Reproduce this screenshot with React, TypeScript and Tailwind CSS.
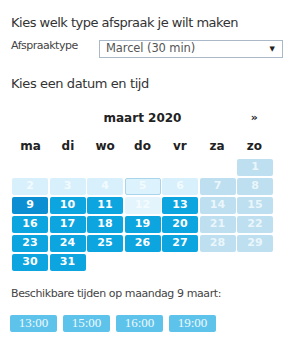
import React from "react";

type Kind = "past" | "today" | "weekend" | "avail" | "sel" | "light" | "empty";

const cells: { d: string; k: Kind }[] = [
  ...Array.from({ length: 6 }, () => ({ d: "", k: "empty" as Kind })),
  { d: "1", k: "weekend" },
  { d: "2", k: "past" },
  { d: "3", k: "past" },
  { d: "4", k: "past" },
  { d: "5", k: "today" },
  { d: "6", k: "past" },
  { d: "7", k: "weekend" },
  { d: "8", k: "weekend" },
  { d: "9", k: "sel" },
  { d: "10", k: "avail" },
  { d: "11", k: "avail" },
  { d: "12", k: "light" },
  { d: "13", k: "avail" },
  { d: "14", k: "weekend" },
  { d: "15", k: "weekend" },
  { d: "16", k: "avail" },
  { d: "17", k: "avail" },
  { d: "18", k: "avail" },
  { d: "19", k: "avail" },
  { d: "20", k: "avail" },
  { d: "21", k: "weekend" },
  { d: "22", k: "weekend" },
  { d: "23", k: "avail" },
  { d: "24", k: "avail" },
  { d: "25", k: "avail" },
  { d: "26", k: "avail" },
  { d: "27", k: "avail" },
  { d: "28", k: "weekend" },
  { d: "29", k: "weekend" },
  { d: "30", k: "avail" },
  { d: "31", k: "avail" },
];

const cls: Record<Kind, string> = {
  empty: "",
  past: "bg-[#d8f0fb] text-[#f2fbff]",
  today: "bg-[#dcf2fc] text-[#f2fbff] border border-[#a9d5ea]",
  weekend: "bg-[#bddff0] text-[#eaf6fb]",
  avail: "bg-[#0ca5e0] text-white",
  sel: "bg-[#0b8ed2] text-white",
  light: "bg-[#e3f4fc] text-[#f4fbff]",
};

export default function App() {
  return (
    <div
      className="w-[300px] h-[364px] bg-white text-[#333] px-[11px] pt-[15px]"
      style={{ fontFamily: "'DejaVu Sans', Verdana, sans-serif" }}
    >
      <div className="text-[13px] leading-[16px] tracking-[-0.5px]">Kies welk type afspraak je wilt maken</div>
      <div className="flex items-center mt-[9px] h-[18px]">
        <div className="text-[11px] text-[#444] w-[88px] -mt-[5px] tracking-[-0.5px]">Afspraaktype</div>
        <div className="w-[184px] h-[18px] border border-[#aab8c8] flex items-center justify-between pl-[6px] pr-[7px] text-[11.5px] text-[#555]">
          <span className="tracking-[-0.1px]">Marcel (30 min)</span>
          <span className="text-[7px] text-[#222]">▼</span>
        </div>
      </div>
      <div className="text-[13px] leading-[16px] mt-[18px] tracking-[-0.4px]">Kies een datum en tijd</div>

      <div className="w-[261px] ml-[1px] mt-[17px]">
        <div className="grid grid-cols-7 h-[16px] items-center">
          <div />
          <div className="col-span-5 text-center font-bold text-[12px] text-[#222]">maart 2020</div>
          <div className="text-center font-bold text-[11px] text-[#222]">»</div>
        </div>
        <div className="grid grid-cols-7 mt-[12px] h-[16px] items-center">
          {["ma", "di", "wo", "do", "vr", "za", "zo"].map((w) => (
            <div key={w} className="text-center font-bold text-[12px] text-[#222]">
              {w}
            </div>
          ))}
        </div>
        <div className="grid grid-cols-7 gap-x-[1.5px] gap-y-[2px] mt-[6px]">
          {cells.map((c, i) => (
            <div
              key={i}
              className={`h-[17px] rounded-[2px] flex items-center justify-center font-bold text-[11px] ${cls[c.k]}`}
            >
              {c.d}
            </div>
          ))}
        </div>
      </div>

      <div className="text-[11px] text-[#444] mt-[15px] tracking-[-0.4px]">Beschikbare tijden op maandag 9 maart:</div>
      <div className="flex gap-[6px] mt-[12px] -ml-[1px]">
        {["13:00", "15:00", "16:00", "19:00"].map((t) => (
          <div
            key={t}
            className="w-[47px] h-[17px] rounded-[2px] bg-[#5ec3ea] text-[#eef9fe] flex items-center justify-center text-[13px]"
            style={{ fontFamily: "'Liberation Serif', 'Times New Roman', serif" }}
          >
            {t}
          </div>
        ))}
      </div>
    </div>
  );
}
